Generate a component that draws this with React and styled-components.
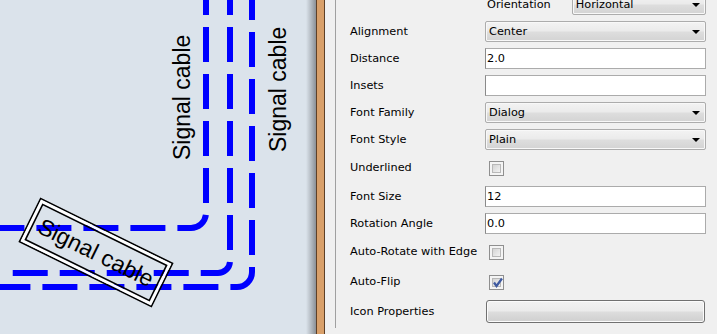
import React from "react";
import styled, { createGlobalStyle } from "styled-components";

const GlobalStyle = createGlobalStyle`
  html, body {
    margin: 0;
    padding: 0;
    overflow: hidden;
  }
`;

const Window = styled.div`
  display: flex;
  width: 717px;
  height: 334px;
  overflow: hidden;
`;

const Canvas = styled.div`
  width: 316px;
  height: 334px;
  flex: none;
  background: linear-gradient(
    to right,
    #dbe3eb 0,
    #dbe3eb 306px,
    #b4bbc2 311px,
    #8b9096 316px
  );
`;

const Splitter = styled.div`
  width: 7px;
  flex: none;
  background: #d9a06a;
  border-left: 1px solid #5e4027;
  border-right: 1px solid #5e4027;
`;

const Panel = styled.div`
  flex: 1;
  background: #f0f0f0;
  padding-left: 10px;
  overflow: hidden;
`;

const Sheet = styled.div`
  height: 100%;
  border-left: 1px solid #a0a0a0;
  padding-left: 14px;
`;

const Form = styled.div`
  display: grid;
  grid-template-columns: 135px 221px;
  row-gap: 6px;
  margin-top: -6px;
  align-items: center;
  font-family: "DejaVu Sans", "Liberation Sans", sans-serif;
  font-size: 11.3px;
  color: #000;
`;

const Label = styled.div`
  white-space: nowrap;
  line-height: 14px;
`;

const Inline = styled.div`
  display: flex;
  align-items: center;
  padding-left: 2px;
  gap: 21px;
`;

const Combo = styled.div`
  box-sizing: border-box;
  height: 21px;
  width: ${(p) => p.width || "100%"};
  display: flex;
  align-items: center;
  justify-content: space-between;
  padding: 0 5px 0 3px;
  border: 1px solid #acacac;
  border-radius: 2px;
  background: linear-gradient(#f3f3f3 0%, #ebebeb 45%, #dddddd 55%, #d3d3d3 100%);
  box-shadow: inset 0 0 0 1px #f8f8f8;
`;

const Arrow = styled.span`
  width: 0;
  height: 0;
  border-left: 4px solid transparent;
  border-right: 4px solid transparent;
  border-top: 4px solid #000;
`;

const Field = styled.div`
  box-sizing: border-box;
  height: 21px;
  display: flex;
  align-items: center;
  padding-left: 1px;
  background: #fff;
  border: 1px solid #ababab;
  border-left-color: #8a8a8a;
`;

const CheckCell = styled.div`
  height: 24px;
  display: flex;
  align-items: center;
  padding-left: 4px;
`;

const Box = styled.div`
  box-sizing: border-box;
  width: 15px;
  height: 15px;
  border: 1px solid #8f8f8f;
  background: #f4f4f4;
  padding: 2px;
  position: relative;
`;

const BoxInner = styled.div`
  width: 100%;
  height: 100%;
  box-sizing: border-box;
  border: 1px solid #b8b8b8;
  background: linear-gradient(135deg, #d4d4d4, #f2f2f2);
`;

const CheckMark = styled.svg`
  position: absolute;
  left: 1px;
  top: 0px;
`;

const Button = styled.div`
  box-sizing: border-box;
  height: 23px;
  margin-left: 1px;
  width: 219px;
  border: 1px solid #707070;
  border-radius: 3px;
  background: linear-gradient(#f2f2f2 0%, #ebebeb 48%, #dddddd 52%, #cfcfcf 100%);
  box-shadow: inset 0 0 0 1px #fbfbfb;
`;

function Checkbox({ checked }) {
  return (
    <CheckCell>
      <Box>
        <BoxInner />
        {checked && (
          <CheckMark width="13" height="13" viewBox="0 0 13 13">
            <path d="M3 6.5 L5.5 10 L11 2.5" fill="none" stroke="#3f5aa0" strokeWidth="2.2" />
          </CheckMark>
        )}
      </Box>
    </CheckCell>
  );
}

function Diagram() {
  const line = {
    fill: "none",
    stroke: "#0000ff",
    strokeWidth: 6,
    strokeDasharray: "35 12",
  };
  const text = {
    fontFamily: "'Liberation Sans', Arial, sans-serif",
    fontSize: 23,
    fill: "#000",
  };
  return (
    <svg width="316" height="334" viewBox="0 0 316 334">
      <path d="M206 0 V213 A15 15 0 0 1 191 228 H0" style={{ ...line, strokeDashoffset: 20 }} />
      <path d="M230 0 V261 A12 12 0 0 1 218 273 H12" style={{ ...line, strokeDashoffset: 20 }} />
      <path d="M252 0 V272 A15 15 0 0 1 237 287 H0" style={{ ...line, strokeDashoffset: 15 }} />
      <text transform="translate(190 160) rotate(-90)" style={text}>Signal cable</text>
      <text transform="translate(286 152) rotate(-90)" style={text}>Signal cable</text>
      <g transform="translate(96 252.5) rotate(26.2)">
        <rect x="-73.5" y="-24" width="147" height="48" fill="none" stroke="#000" strokeWidth="1.6" />
        <rect x="-71.3" y="-21.8" width="142.6" height="43.6" fill="none" stroke="#fff" strokeWidth="2.6" />
        <rect x="-69" y="-19.5" width="138" height="39" fill="none" stroke="#000" strokeWidth="1.6" />
        <text x="0" y="8" textAnchor="middle" style={text}>Signal cable</text>
      </g>
    </svg>
  );
}

export default function App() {
  return (
    <>
      <GlobalStyle />
      <Window>
        <Canvas>
          <Diagram />
        </Canvas>
        <Splitter />
        <Panel>
          <Sheet>
            <Form>
              <div />
              <Inline>
                <Label>Orientation</Label>
                <Combo width="137px">
                  Horizontal <Arrow />
                </Combo>
              </Inline>

              <Label>Alignment</Label>
              <Combo>
                Center <Arrow />
              </Combo>

              <Label>Distance</Label>
              <Field>2.0</Field>

              <Label>Insets</Label>
              <Field />

              <Label>Font Family</Label>
              <Combo>
                Dialog <Arrow />
              </Combo>

              <Label>Font Style</Label>
              <Combo>
                Plain <Arrow />
              </Combo>

              <Label>Underlined</Label>
              <Checkbox />

              <Label>Font Size</Label>
              <Field>12</Field>

              <Label>Rotation Angle</Label>
              <Field>0.0</Field>

              <Label>Auto-Rotate with Edge</Label>
              <Checkbox />

              <Label>Auto-Flip</Label>
              <Checkbox checked />

              <Label>Icon Properties</Label>
              <Button />
            </Form>
          </Sheet>
        </Panel>
      </Window>
    </>
  );
}
